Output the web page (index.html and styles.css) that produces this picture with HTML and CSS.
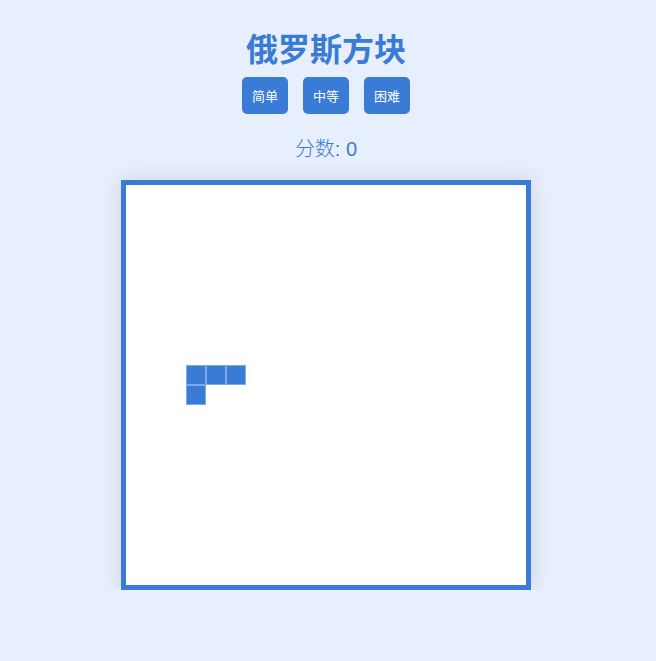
FILE: index.html
```html
<!DOCTYPE html>
<html lang="zh">
<head>
<meta charset="utf-8">
<title>俄罗斯方块</title>
<link rel="stylesheet" href="styles.css">
</head>
<body>
<main class="game">
  <h1 class="title">俄罗斯方块</h1>
  <div class="levels">
    <button class="level">简单</button>
    <button class="level">中等</button>
    <button class="level">困难</button>
  </div>
  <div class="score">分数: 0</div>
  <div class="board">
    <div class="cell" style="grid-column:4;grid-row:10"></div>
    <div class="cell" style="grid-column:5;grid-row:10"></div>
    <div class="cell" style="grid-column:6;grid-row:10"></div>
    <div class="cell" style="grid-column:4;grid-row:11"></div>
  </div>
</main>
</body>
</html>
```
FILE: styles.css
```css
html, body {
  margin: 0;
  padding: 0;
}
body {
  background: #e8effc;
  font-family: "Noto Sans CJK SC", "Liberation Sans", sans-serif;
  color: #3a7bd5;
}
.game {
  display: flex;
  flex-direction: column;
  align-items: center;
  padding-top: 24px;
  padding-right: 4px;
}
.title {
  margin: 0;
  font-size: 32px;
  line-height: 46px;
  font-weight: bold;
  color: #3a7bd5;
}
.levels {
  display: flex;
  gap: 15px;
  margin-top: 7px;
}
.level {
  background: #3a7bd5;
  color: #fff;
  border: none;
  border-radius: 5px;
  width: 46px;
  height: 37px;
  padding: 0;
  font-family: "Noto Sans CJK SC", sans-serif;
  font-size: 13px;
}
.score {
  margin-top: 20px;
  font-size: 20px;
  line-height: 30px;
  font-weight: 300;
  font-family: "Liberation Sans", "Noto Sans CJK SC", sans-serif;
}
.board {
  margin-top: 16px;
  width: 400px;
  height: 400px;
  background: #fff;
  border: 5px solid #3a7bd5;
  box-shadow: 0 0 20px rgba(0, 0, 0, 0.12);
  display: grid;
  grid-template-columns: repeat(20, 20px);
  grid-template-rows: repeat(20, 20px);
}
.cell {
  box-sizing: border-box;
  background: #3a7bd5;
  border: 1px solid #7eaaeb;
}
```
